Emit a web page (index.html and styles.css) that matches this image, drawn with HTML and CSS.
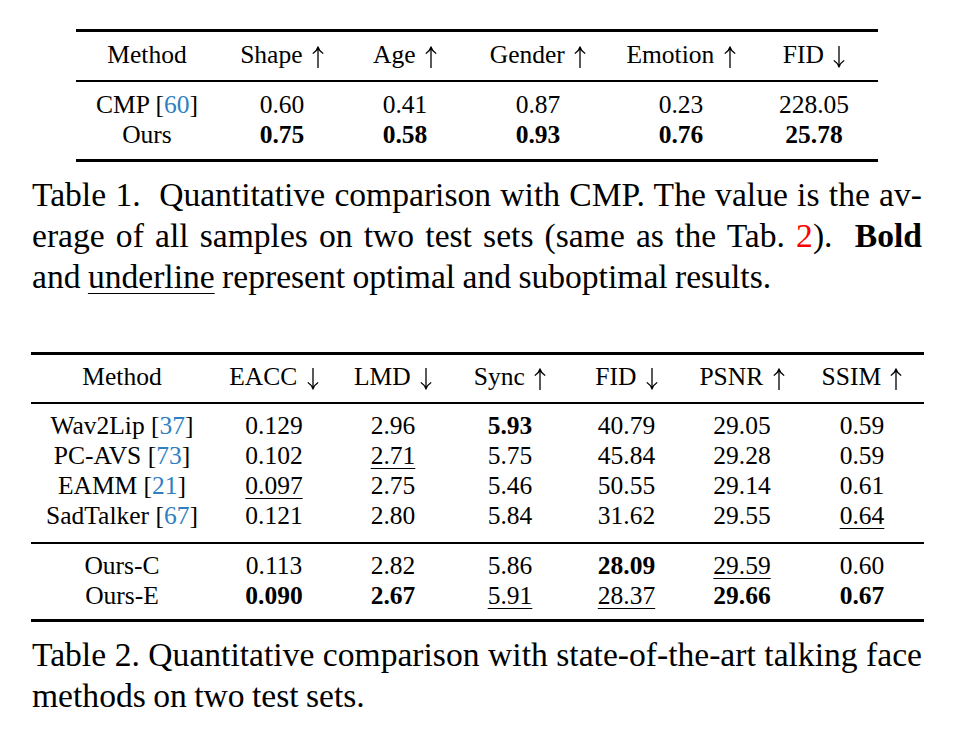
FILE: index.html
```html
<!DOCTYPE html>
<html lang="en">
<head>
<meta charset="utf-8">
<title>Tables</title>
<link rel="stylesheet" href="styles.css">
</head>
<body>
<div class="page">
  <table class="tab tab1">
    <colgroup>
      <col class="w142"><col class="w128"><col class="w118"><col class="w148"><col class="w138"><col class="w128">
    </colgroup>
    <thead>
      <tr class="head">
        <th>Method</th>
        <th>Shape <svg class="arr" viewBox="0 0 12 22" role="img" aria-label="↑"><path d="M6 1.2V22M6 1C5.3 3.6 3.4 5.8 1.2 7.2M6 1C6.7 3.6 8.6 5.8 10.8 7.2"/></svg></th>
        <th>Age <svg class="arr" viewBox="0 0 12 22" role="img" aria-label="↑"><path d="M6 1.2V22M6 1C5.3 3.6 3.4 5.8 1.2 7.2M6 1C6.7 3.6 8.6 5.8 10.8 7.2"/></svg></th>
        <th>Gender <svg class="arr" viewBox="0 0 12 22" role="img" aria-label="↑"><path d="M6 1.2V22M6 1C5.3 3.6 3.4 5.8 1.2 7.2M6 1C6.7 3.6 8.6 5.8 10.8 7.2"/></svg></th>
        <th>Emotion <svg class="arr" viewBox="0 0 12 22" role="img" aria-label="↑"><path d="M6 1.2V22M6 1C5.3 3.6 3.4 5.8 1.2 7.2M6 1C6.7 3.6 8.6 5.8 10.8 7.2"/></svg></th>
        <th>FID <svg class="arr" viewBox="0 0 12 22" role="img" aria-label="↓"><path d="M6 0V20.8M6 21C5.3 18.4 3.4 16.2 1.2 14.8M6 21C6.7 18.4 8.6 16.2 10.8 14.8"/></svg></th>
      </tr>
    </thead>
    <tbody>
      <tr class="first">
        <td>CMP [<span class="cite">60</span>]</td><td>0.60</td><td>0.41</td><td>0.87</td><td>0.23</td><td>228.05</td>
      </tr>
      <tr class="last">
        <td>Ours</td><td class="b">0.75</td><td class="b">0.58</td><td class="b">0.93</td><td class="b">0.76</td><td class="b">25.78</td>
      </tr>
    </tbody>
  </table>

  <div class="caption cap1">
    <div class="jline">Table 1.&nbsp; Quantitative comparison with CMP. The value is the av-</div>
    <div class="jline">erage of all samples on two test sets (same as the Tab. <span class="ref">2</span>).&nbsp; <b>Bold</b></div>
    <div class="line">and <span class="u">underline</span> represent optimal and suboptimal results.</div>
  </div>

  <table class="tab tab2">
    <colgroup>
      <col class="w182"><col class="w122"><col class="w116"><col class="w118"><col class="w115"><col class="w116"><col class="w124">
    </colgroup>
    <thead>
      <tr class="head">
        <th>Method</th>
        <th>EACC <svg class="arr" viewBox="0 0 12 22" role="img" aria-label="↓"><path d="M6 0V20.8M6 21C5.3 18.4 3.4 16.2 1.2 14.8M6 21C6.7 18.4 8.6 16.2 10.8 14.8"/></svg></th>
        <th>LMD <svg class="arr" viewBox="0 0 12 22" role="img" aria-label="↓"><path d="M6 0V20.8M6 21C5.3 18.4 3.4 16.2 1.2 14.8M6 21C6.7 18.4 8.6 16.2 10.8 14.8"/></svg></th>
        <th>Sync <svg class="arr" viewBox="0 0 12 22" role="img" aria-label="↑"><path d="M6 1.2V22M6 1C5.3 3.6 3.4 5.8 1.2 7.2M6 1C6.7 3.6 8.6 5.8 10.8 7.2"/></svg></th>
        <th>FID <svg class="arr" viewBox="0 0 12 22" role="img" aria-label="↓"><path d="M6 0V20.8M6 21C5.3 18.4 3.4 16.2 1.2 14.8M6 21C6.7 18.4 8.6 16.2 10.8 14.8"/></svg></th>
        <th>PSNR <svg class="arr" viewBox="0 0 12 22" role="img" aria-label="↑"><path d="M6 1.2V22M6 1C5.3 3.6 3.4 5.8 1.2 7.2M6 1C6.7 3.6 8.6 5.8 10.8 7.2"/></svg></th>
        <th>SSIM <svg class="arr" viewBox="0 0 12 22" role="img" aria-label="↑"><path d="M6 1.2V22M6 1C5.3 3.6 3.4 5.8 1.2 7.2M6 1C6.7 3.6 8.6 5.8 10.8 7.2"/></svg></th>
      </tr>
    </thead>
    <tbody>
      <tr class="first">
        <td>Wav2Lip [<span class="cite">37</span>]</td><td>0.129</td><td>2.96</td><td class="b">5.93</td><td>40.79</td><td>29.05</td><td>0.59</td>
      </tr>
      <tr>
        <td>PC-AVS [<span class="cite">73</span>]</td><td>0.102</td><td><span class="u">2.71</span></td><td>5.75</td><td>45.84</td><td>29.28</td><td>0.59</td>
      </tr>
      <tr>
        <td>EAMM [<span class="cite">21</span>]</td><td><span class="u">0.097</span></td><td>2.75</td><td>5.46</td><td>50.55</td><td>29.14</td><td>0.61</td>
      </tr>
      <tr class="mid">
        <td>SadTalker [<span class="cite">67</span>]</td><td>0.121</td><td>2.80</td><td>5.84</td><td>31.62</td><td>29.55</td><td><span class="u">0.64</span></td>
      </tr>
      <tr class="first">
        <td>Ours-C</td><td>0.113</td><td>2.82</td><td>5.86</td><td class="b">28.09</td><td><span class="u">29.59</span></td><td>0.60</td>
      </tr>
      <tr class="last">
        <td>Ours-E</td><td class="b">0.090</td><td class="b">2.67</td><td><span class="u">5.91</span></td><td><span class="u">28.37</span></td><td class="b">29.66</td><td class="b">0.67</td>
      </tr>
    </tbody>
  </table>

  <div class="caption cap2">
    <div class="jline">Table 2. Quantitative comparison with state-of-the-art talking face</div>
    <div class="line">methods on two test sets.</div>
  </div>
</div>
</body>
</html>
```

FILE: styles.css
```css
html, body {
  margin: 0;
  padding: 0;
  background: #ffffff;
}

body {
  color: #000000;
  font-family: "Liberation Serif", "Times New Roman", serif;
}

.page {
  width: 890px;
  margin-left: 32px;
  padding-top: 29px;
}

.tab {
  border-collapse: separate;
  border-spacing: 0;
  table-layout: fixed;
  font-size: 25.5px;
  line-height: 30px;
}

.tab th,
.tab td {
  padding: 0;
  text-align: center;
  font-weight: normal;
  white-space: nowrap;
}

.tab .b {
  font-weight: bold;
}

.arr {
  width: 12px;
  height: 22px;
  margin-left: 3px;
  vertical-align: -5px;
  fill: none;
  stroke: currentColor;
  stroke-width: 1.3;
  stroke-linecap: round;
}

.tab1 {
  width: 802px;
  margin-left: 44px;
}

.tab2 {
  width: 893px;
  margin-left: -1px;
  margin-top: 55px;
}

.w142 { width: 142px; }
.w128 { width: 128px; }
.w118 { width: 118px; }
.w148 { width: 148px; }
.w138 { width: 138px; }
.w182 { width: 182px; }
.w122 { width: 122px; }
.w116 { width: 116px; }
.w115 { width: 115px; }
.w124 { width: 124px; }

/* Table 1 rules and spacing */
.tab1 .head th {
  border-top: 3px solid #000;
  border-bottom: 2px solid #000;
  padding-top: 8px;
  padding-bottom: 10px;
}

.tab1 .first td {
  padding-top: 8px;
}

.tab1 .last td {
  padding-bottom: 9px;
  border-bottom: 3px solid #000;
}

/* Table 2 rules and spacing */
.tab2 .head th {
  border-top: 3px solid #000;
  border-bottom: 2px solid #000;
  padding-top: 7px;
  padding-bottom: 10px;
}

.tab2 .first td {
  padding-top: 7px;
}

.tab2 .mid td {
  padding-bottom: 11px;
  border-bottom: 2px solid #000;
}

.tab2 .last td {
  padding-bottom: 8px;
  border-bottom: 3px solid #000;
}

.cite {
  color: #2f7fc1;
}

.ref {
  color: #ff0000;
}

.u {
  text-decoration: underline;
  text-decoration-thickness: 1px;
  text-underline-offset: 4px;
}

.caption {
  font-size: 33.6px;
  line-height: 41px;
  word-spacing: -1px;
}

.caption .u {
  text-underline-offset: 5px;
}

.cap1 {
  margin-top: 12px;
}

.cap2 {
  margin-top: 12px;
}

.jline {
  text-align: justify;
  text-align-last: justify;
}

.line {
  text-align: left;
}
```
